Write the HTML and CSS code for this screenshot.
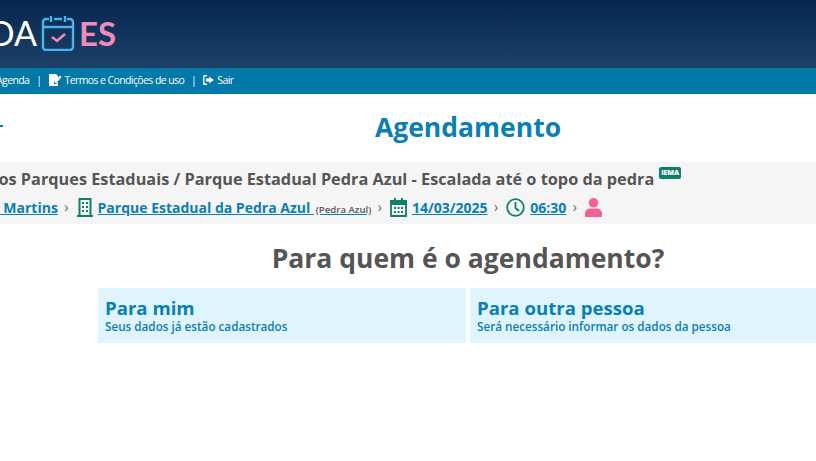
FILE: index.html
```html
<!DOCTYPE html>
<html lang="pt-BR">
<head>
    <meta charset="UTF-8">
    <meta name="viewport" content="width=device-width, initial-scale=1.0">
    <title>Agendamento</title>
    <link rel="stylesheet" href="styles.css">
</head>
<body>
    <div class="page">
        <header class="topo">
            <div class="logo">
                <span class="logo-agenda">AGENDA</span>
                <svg class="logo-icone" width="34" height="36" viewBox="0 0 34 36" fill="none">
                    <path d="M8 4H5a3 3 0 0 0-3 3v25a3 3 0 0 0 3 3h24a3 3 0 0 0 3-3V7a3 3 0 0 0-3-3h-3" stroke="#4db3ea" stroke-width="2.400"/>
                    <path d="M13 4h8M2 12h30M10 1v6M24 1v6" stroke="#4db3ea" stroke-width="2.400"/>
                    <path d="M11 22l5 4 8-7" stroke="#ee8dbb" stroke-width="2.400"/>
                </svg>
                <span class="logo-es">ES</span>
            </div>
        </header>

        <nav class="menu">
            <a href="#">Agenda</a>
            <span class="menu-sep">|</span>
            <a href="#">
                <svg width="13" height="12" viewBox="0 0 13 12"><path d="M0 0h7l2 2v2L5 8v2h2l2-2v4H0zM6 9V6.500l5-5 1.500 1.500-5 6z" fill="#fff"/></svg>
                Termos e Condições de uso
            </a>
            <span class="menu-sep">|</span>
            <a href="#">
                <svg width="11" height="10" viewBox="0 0 11 10"><path d="M4 0H1.500A1.500 1.500 0 0 0 0 1.500v7A1.500 1.500 0 0 0 1.500 10H4V8.500H1.500v-7H4zM6 1.500 11 5 6 8.500V6.500H3v-3h3z" fill="#fff"/></svg>
                Sair
            </a>
        </nav>

        <main>
            <div class="titulo-linha">
                <svg class="voltar" width="22" height="14" viewBox="0 0 22 14" fill="none"><path d="M1 7h20M7 1 1 7l6 6" stroke="#0a7fb3" stroke-width="2"/></svg>
                <h1>Agendamento</h1>
            </div>

            <section class="resumo">
                <div class="resumo-servico">
                    <span>Agendamentos Parques Estaduais / Parque Estadual Pedra Azul - Escalada até o topo da pedra</span>
                    <span class="selo">IEMA</span>
                </div>
                <div class="resumo-passos">
                    <a href="#">Domingos Martins</a>
                    <span class="seta">›</span>
                    <svg width="16" height="19" viewBox="0 0 16 19" fill="none">
                        <path d="M2.500 1h11v17h-11zM0 18h16" stroke="#0f7f6c" stroke-width="2"/>
                        <path d="M5 4h2v2H5zM9 4h2v2H9zM5 8h2v2H5zM9 8h2v2H9zM5 12h2v2H5zM9 12h2v2H9z" fill="#0f7f6c"/>
                    </svg>
                    <a href="#">Parque Estadual da Pedra Azul <small>(Pedra Azul)</small></a>
                    <span class="seta">›</span>
                    <svg width="17" height="19" viewBox="0 0 17 19" fill="none">
                        <path d="M1 4h15v14H1z" stroke="#0f7f6c" stroke-width="1.800"/>
                        <path d="M0 2h17v5H0zM4 0h2v3H4zM11 0h2v3h-2z" fill="#0f7f6c"/>
                        <path d="M4 9h2v2H4zM7.500 9h2v2h-2zM11 9h2v2h-2zM4 13h2v2H4zM7.500 13h2v2h-2zM11 13h2v2h-2z" fill="#0f7f6c"/>
                    </svg>
                    <a href="#">14/03/2025</a>
                    <span class="seta">›</span>
                    <svg width="19" height="19" viewBox="0 0 19 19" fill="none">
                        <circle cx="9.500" cy="9.500" r="8.300" stroke="#0f7f6c" stroke-width="1.800"/>
                        <path d="M9.500 4v6l3.500 3" stroke="#0f7f6c" stroke-width="1.800"/>
                    </svg>
                    <a href="#">06:30</a>
                    <span class="seta">›</span>
                    <svg width="17" height="19" viewBox="0 0 17 19"><circle cx="8.500" cy="4.800" r="4.800" fill="#f0639a"/><path d="M0 19v-3.500C0 12.500 2.500 10.500 5 10.500h7c2.500 0 5 2 5 5V19z" fill="#f0639a"/></svg>
                </div>
            </section>

            <h2>Para quem é o agendamento?</h2>

            <div class="opcoes">
                <a class="opcao" href="#">
                    <strong>Para mim</strong>
                    <span>Seus dados já estão cadastrados</span>
                </a>
                <a class="opcao" href="#">
                    <strong>Para outra pessoa</strong>
                    <span>Será necessário informar os dados da pessoa</span>
                </a>
            </div>
        </main>
    </div>
</body>
</html>
```

FILE: styles.css
```css
html, body {
    margin: 0;
    height: 100%;
    overflow: hidden;
    background: #fff;
}

body {
    font-family: "Open Sans", sans-serif;
}

a {
    color: inherit;
}

/* a pagina e mais larga que a janela, sai cortada dos dois lados */
.page {
    width: 1100px;
    margin-left: -82px;
}

.topo {
    height: 68px;
    box-sizing: border-box;
    padding-top: 15px;
    background: linear-gradient(to bottom, #06264f, #1c4268);
}

.logo {
    display: flex;
    align-items: center;
    gap: 4px;
    margin-left: -22px;
    font-family: "Lato", sans-serif;
    font-size: 34px;
    line-height: 36px;
}

.logo-agenda {
    color: #fff;
    font-weight: 400;
}

.logo-es {
    color: #ee8dbb;
    font-size: 33px;
    font-weight: 700;
}

.menu {
    height: 26px;
    box-sizing: border-box;
    padding: 0 0 2px 78px;
    display: flex;
    align-items: center;
    gap: 7px;
    background: #0078a8;
    color: #fff;
    font-size: 10.500px;
    letter-spacing: -0.600px;
}

.menu a {
    text-decoration: none;
    display: flex;
    align-items: center;
    gap: 3px;
}

.titulo-linha {
    height: 68px;
    box-sizing: border-box;
    padding-bottom: 3px;
    display: flex;
    align-items: center;
    justify-content: center;
    position: relative;
}

.voltar {
    position: absolute;
    left: 64px;
    top: 25px;
}

h1 {
    margin: 0;
    font-size: 26.500px;
    font-weight: 700;
    color: #0a7fb3;
}

.resumo {
    height: 62px;
    box-sizing: border-box;
    padding: 5px 0 0 0;
    background: #f5f5f5;
    color: #555;
}

.resumo-servico {
    display: flex;
    align-items: center;
    gap: 5px;
    justify-content: flex-end;
    padding-right: 337px;
    height: 24px;
    font-size: 16.300px;
    font-weight: 700;
    line-height: 22px;
    white-space: nowrap;
}

.selo {
    height: 12px;
    margin-top: -12px;
    padding: 0 2px;
    font-size: 7px;
    line-height: 12px;
    font-weight: 800;
    letter-spacing: -0.100px;
    color: #fff;
    background: #0f7f6c;
    border-radius: 2px;
}

.resumo-passos {
    display: flex;
    align-items: center;
    justify-content: flex-end;
    gap: 5px;
    padding-right: 416px;
    height: 32px;
    font-size: 14px;
    font-weight: 700;
    color: #0a7fb3;
    white-space: nowrap;
}

.resumo-passos small {
    margin-left: 2px;
    font-size: 9.600px;
    font-weight: 600;
    color: #555;
}

.seta {
    margin: -2px 3px 0 1.500px;
    color: #666;
    font-size: 14px;
    font-weight: 400;
}

h2 {
    margin: 17px 0 13px;
    text-align: center;
    font-size: 26.500px;
    line-height: 34px;
    font-weight: 700;
    color: #555;
}

.opcoes {
    display: flex;
    justify-content: center;
    gap: 4px;
}

.opcao {
    width: 368px;
    height: 55px;
    box-sizing: border-box;
    padding: 9px 7px 0;
    display: flex;
    flex-direction: column;
    background: #e0f4ff;
    color: #0a7fb3;
    text-decoration: none;
}

.opcao strong {
    font-size: 18.600px;
    line-height: 22px;
    font-weight: 700;
}

.opcao span {
    font-size: 11.700px;
    line-height: 14px;
    font-weight: 600;
}
```
